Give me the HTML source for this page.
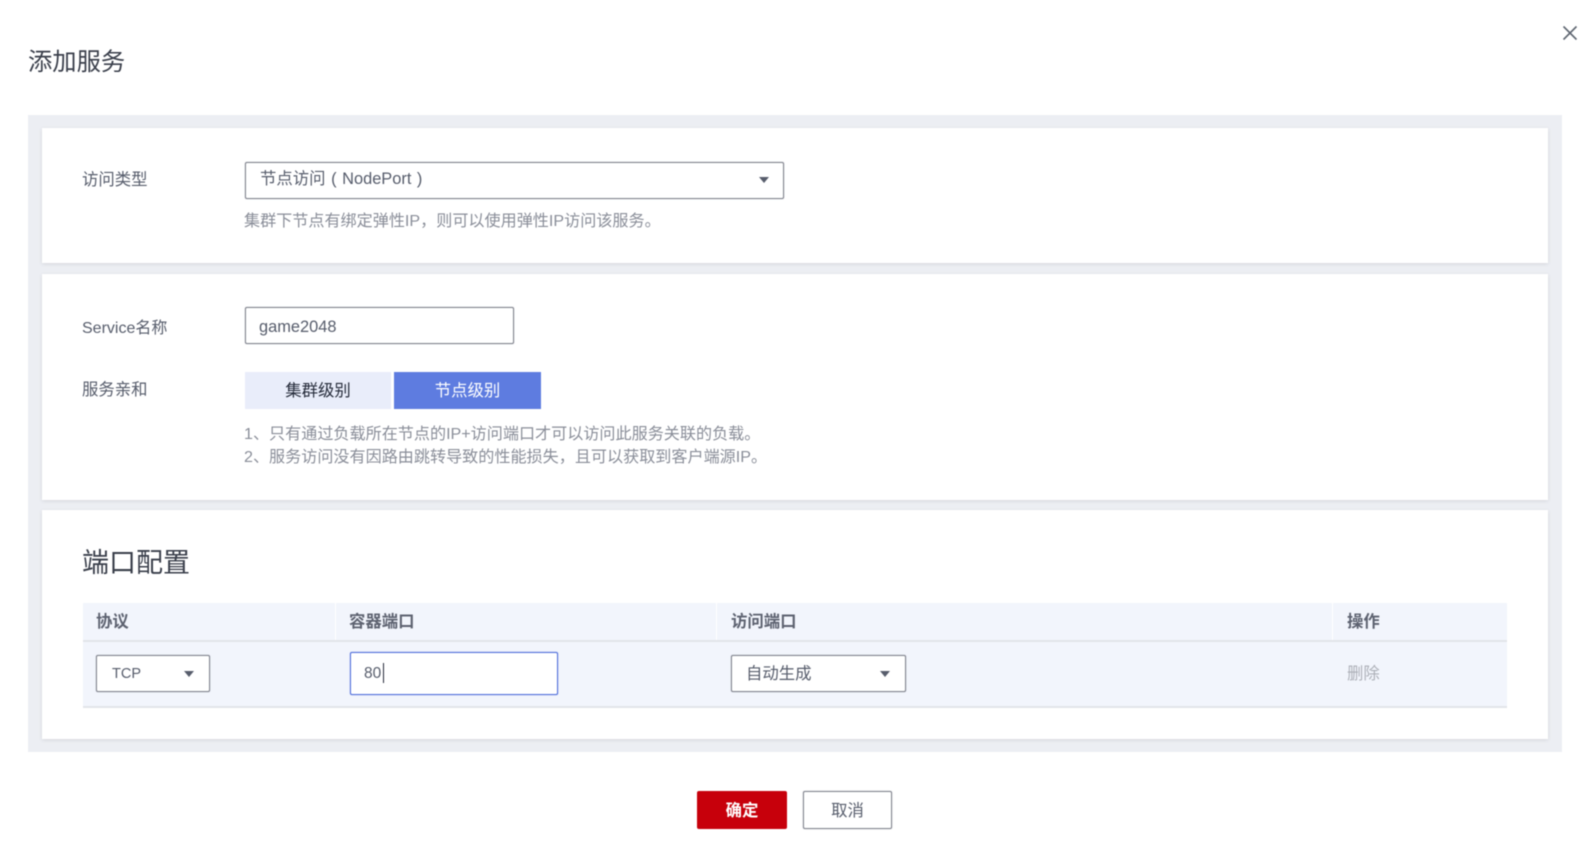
<!DOCTYPE html>
<html lang="zh-CN">
<head>
<meta charset="utf-8">
<title>添加服务</title>
<style>
html,body{margin:0;padding:0;background:#fff;}
body{width:1584px;height:849px;position:relative;overflow:hidden;font-family:"Liberation Sans","Noto Sans CJK SC",sans-serif;color:#575d6c;}
#w{position:absolute;left:0;top:0;width:1584px;height:849px;filter:blur(0.4px);}
.a{position:absolute;box-sizing:border-box;}
.t{position:absolute;white-space:nowrap;font-size:16.4px;line-height:24px;}
.card{background:#fff;box-shadow:0 1px 4px rgba(0,0,0,.1);left:42px;width:1506px;}
.box{background:#fff;border:1px solid #80838d;border-radius:2px;box-shadow:0 0 1px rgba(120,124,135,.75);}
.arrow{position:absolute;width:0;height:0;border-left:5.5px solid transparent;border-right:5.5px solid transparent;border-top:6px solid #575d6c;}
.help{color:#8a8e99;font-size:16.1px;}
.th{font-weight:bold;color:#5d6270;}
</style>
</head>
<body>
<div id="w">
<div class="t" style="left:28px;top:45px;font-size:24.3px;line-height:36px;color:#3a3f4b;">添加服务</div>
<svg class="a" style="left:1562px;top:25px;" width="16" height="16" viewBox="0 0 16 16"><path d="M1.5 1.5L14.5 14.5M14.5 1.5L1.5 14.5" stroke="#5f6672" stroke-width="1.6" fill="none"/></svg>

<div class="a" style="left:28px;top:115px;width:1534px;height:637px;background:#eceef3;"></div>
<div class="a card" style="top:128px;height:135px;"></div>
<div class="a card" style="top:274px;height:226px;"></div>
<div class="a card" style="top:510px;height:229px;"></div>

<div class="t" style="left:82px;top:168px;">访问类型</div>
<div class="a box" style="left:245px;top:162px;width:539px;height:37px;"></div>
<div class="t" style="left:260px;top:167px;word-spacing:1px;">节点访问 ( NodePort )</div>
<div class="arrow" style="left:759px;top:177px;"></div>
<div class="t help" style="left:244px;top:209px;">集群下节点有绑定弹性IP，则可以使用弹性IP访问该服务。</div>

<div class="t" style="left:82px;top:317px;font-size:16px;">Service名称</div>
<div class="a box" style="left:245px;top:307px;width:269px;height:37px;"></div>
<div class="t" style="left:259px;top:315px;">game2048</div>

<div class="t" style="left:82px;top:378px;">服务亲和</div>
<div class="a" style="left:245px;top:372px;width:146px;height:37px;background:#e9edfa;"></div>
<div class="a" style="left:394px;top:372px;width:147px;height:37px;background:#5e7ce0;"></div>
<div class="t" style="left:245px;top:379px;width:146px;text-align:center;color:#252b3a;">集群级别</div>
<div class="t" style="left:394px;top:379px;width:147px;text-align:center;color:#fff;">节点级别</div>
<div class="t help" style="left:244px;top:422px;">1、只有通过负载所在节点的IP+访问端口才可以访问此服务关联的负载。</div>
<div class="t help" style="left:244px;top:445px;">2、服务访问没有因路由跳转导致的性能损失，且可以获取到客户端源IP。</div>

<div class="t" style="left:82px;top:544px;font-size:27px;line-height:38px;color:#3a3f4b;">端口配置</div>

<div class="a" style="left:83px;top:603px;width:1424px;height:104px;background:#f2f5fc;"></div>
<div class="a" style="left:83px;top:640px;width:1424px;height:2px;background:#e2e4e9;"></div>
<div class="a" style="left:83px;top:706px;width:1424px;height:2px;background:#e2e4e9;"></div>
<div class="a" style="left:335px;top:603px;width:1px;height:37px;background:#fff;"></div>
<div class="a" style="left:716px;top:603px;width:1px;height:37px;background:#fff;"></div>
<div class="a" style="left:1332px;top:603px;width:1px;height:37px;background:#fff;"></div>
<div class="t th" style="left:96px;top:610px;">协议</div>
<div class="t th" style="left:349px;top:610px;">容器端口</div>
<div class="t th" style="left:731px;top:610px;">访问端口</div>
<div class="t th" style="left:1347px;top:610px;">操作</div>

<div class="a box" style="left:96px;top:655px;width:114px;height:37px;"></div>
<div class="t" style="left:112px;top:662px;font-size:14.5px;">TCP</div>
<div class="arrow" style="left:184px;top:671px;"></div>

<div class="a" style="left:350px;top:652px;width:208px;height:43px;background:#fff;border:1px solid #4f6edb;border-radius:2px;box-shadow:0 0 1px rgba(80,110,220,.8);"></div>
<div class="t" style="left:364px;top:662px;font-size:15.5px;">80</div>
<div class="a" style="left:383px;top:663px;width:1px;height:20px;background:#252b3a;"></div>

<div class="a box" style="left:731px;top:655px;width:175px;height:37px;"></div>
<div class="t" style="left:746px;top:662px;">自动生成</div>
<div class="arrow" style="left:880px;top:671px;"></div>

<div class="t" style="left:1347px;top:662px;color:#adb0b8;">删除</div>

<div class="a" style="left:697px;top:791px;width:90px;height:38px;background:#c7000b;border-radius:2px;"></div>
<div class="t" style="left:697px;top:799px;width:90px;text-align:center;color:#fff;font-weight:bold;">确定</div>
<div class="a box" style="left:803px;top:791px;width:89px;height:38px;"></div>
<div class="t" style="left:803px;top:799px;width:89px;text-align:center;">取消</div>
</div>
</body>
</html>
